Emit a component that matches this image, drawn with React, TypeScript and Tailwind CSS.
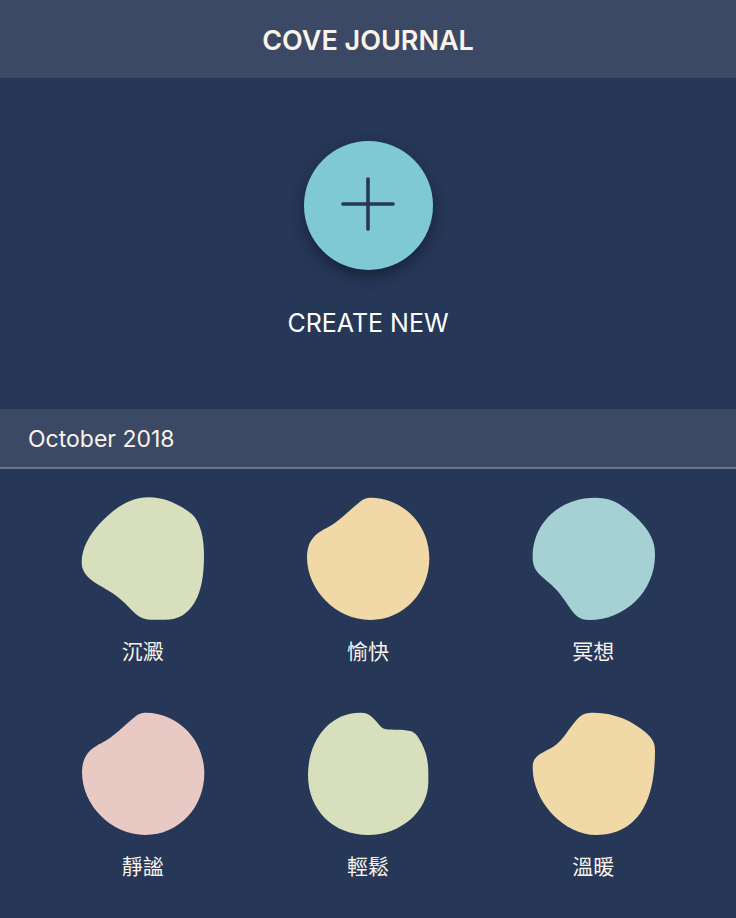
import { Plus } from "lucide-react";

type Entry = {
  label: string;
  color: string;
  shape: string;
};

const pebble =
  "M229 38C327 40 403 121 403 220C403 322 327 405 226 405C123 405 36 315 36 217C36 180 50 154 80 137C100 126 112 121 130 106C155 86 175 66 195 50C207 41 214 38 229 38Z";

const entries: Entry[] = [
  {
    label: "沉澱",
    color: "fill-[#d7dfbd]",
    shape:
      "M236 37C285 37 332 60 366 88C392 112 402 160 402 210C402 270 395 315 375 350C354 387 325 404 285 404L240 404C208 404 191 381 165 355C140 330 115 316 85 299C52 280 35 260 35 232C35 190 58 150 90 115C135 66 185 37 236 37Z",
  },
  { label: "愉快", color: "fill-[#f0d9a6]", shape: pebble },
  {
    label: "冥想",
    color: "fill-[#a5d0d4]",
    shape:
      "M225 38C265 38 288 48 320 73C350 97 370 117 385 140C399 162 405 182 405 210C405 320 315 405 208 405C178 405 164 390 145 362C128 337 119 323 100 305C80 286 66 278 53 262C42 248 38 235 38 215C38 112 122 38 225 38Z",
  },
  { label: "靜謐", color: "fill-[#e8c9c3]", shape: pebble },
  {
    label: "輕鬆",
    color: "fill-[#d7dfbd]",
    shape:
      "M195 38C218 37 226 46 240 60C254 75 258 84 270 87C295 91 318 87 345 93C360 96 370 110 380 130C395 160 400 185 400 220L400 245C400 335 315 405 220 405C115 405 39 330 39 225C39 120 105 38 195 38Z",
  },
  {
    label: "溫暖",
    color: "fill-[#f0d9a6]",
    shape:
      "M222 38C285 38 340 64 380 100C399 118 405 130 405 152C405 215 397 277 370 325C341 378 290 405 230 405C130 405 38 303 38 203C38 178 48 168 75 154C104 139 114 132 130 112C148 88 158 72 175 54C190 40 200 38 222 38Z",
  },
];

const EntryCard = ({ label, color, shape }: Entry) => (
  <li className="flex flex-col items-center gap-4">
    <svg viewBox="33 36 372 372" className="size-[124px]" aria-hidden="true">
      <path d={shape} className={color} />
    </svg>
    <span className="text-[21px] leading-[30px]">{label}</span>
  </li>
);

const App = () => {
  return (
    <div className="min-h-screen bg-[#263757] text-[#faf3eb] font-['Inter','Noto_Sans_CJK_TC',sans-serif]">
      <header className="bg-[#3c4964] pt-[22px] pb-[18px] text-center">
        <h1 className="text-[27px] leading-[38px] font-semibold">COVE JOURNAL</h1>
      </header>

      <section className="flex flex-col items-center gap-9 pt-[63px] pb-[69px]">
        <button
          id="create"
          type="button"
          aria-labelledby="create-label"
          className="flex size-[129px] items-center justify-center rounded-full bg-[#7fc9d2] pb-1 text-[#263757] shadow-[0_6px_14px_rgba(15,22,40,0.6)]"
        >
          <Plus size={86} strokeWidth={1} aria-hidden="true" />
        </button>
        <label id="create-label" htmlFor="create" className="text-[25px] leading-[34px] text-white">
          CREATE NEW
        </label>
      </section>

      <section>
        <h2 className="border-b-2 border-[#6a748a] bg-[#3c4964] px-7 pt-[13px] pb-[11px] text-[23px] leading-[34px]">
          October 2018
        </h2>
        <ul className="grid grid-cols-3 gap-y-[45px] px-[30px] pt-7 pb-8">
          {entries.map((entry) => (
            <EntryCard key={entry.label} {...entry} />
          ))}
        </ul>
      </section>
    </div>
  );
};

export default App;
